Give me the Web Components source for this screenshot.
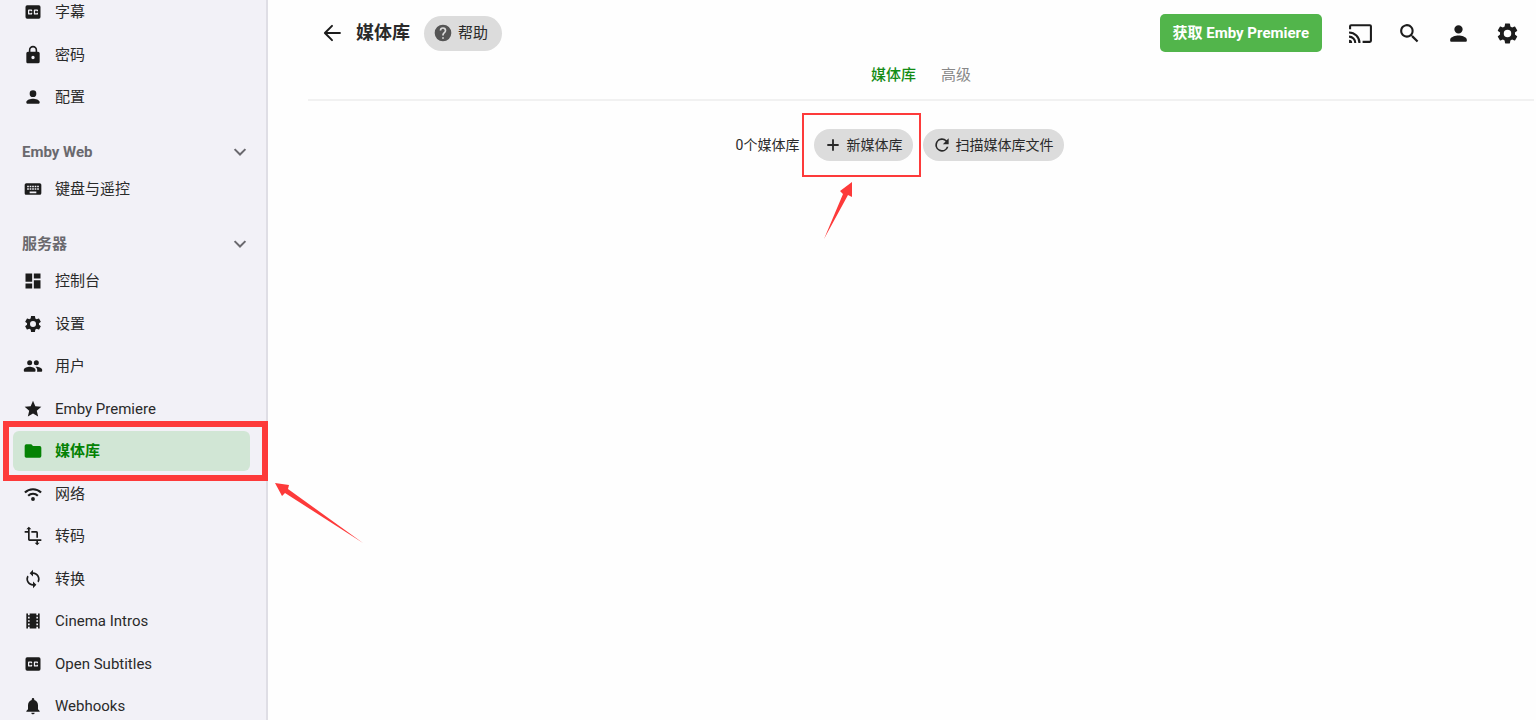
<!DOCTYPE html>
<html lang="zh-CN">
<head>
<meta charset="utf-8">
<title>媒体库</title>
<style>
  *,*::before,*::after{
    box-sizing: border-box;
  }
  body{
    margin: 0;
    background: #fefefe;
    color: #2a2a2a;
    font: 15px/20px Roboto, "Noto Sans CJK SC", sans-serif;
  }
</style>
</head>
<body>
<app-shell>
  <side-nav slot="nav">
    <nav-group>
      <nav-item icon="cc">字幕</nav-item>
      <nav-item icon="lock">密码</nav-item>
      <nav-item icon="person">配置</nav-item>
    </nav-group>
    <nav-group heading="Emby Web">
      <nav-item icon="keyboard">键盘与遥控</nav-item>
    </nav-group>
    <nav-group heading="服务器">
      <nav-item icon="dashboard">控制台</nav-item>
      <nav-item icon="settings">设置</nav-item>
      <nav-item icon="people">用户</nav-item>
      <nav-item icon="star">Emby Premiere</nav-item>
      <nav-item icon="folder" active>媒体库</nav-item>
      <nav-item icon="wifi">网络</nav-item>
      <nav-item icon="crop">转码</nav-item>
      <nav-item icon="sync">转换</nav-item>
      <nav-item icon="film">Cinema Intros</nav-item>
      <nav-item icon="cc">Open Subtitles</nav-item>
      <nav-item icon="bell">Webhooks</nav-item>
    </nav-group>
  </side-nav>
  <page-header heading="媒体库">
    <pill-button slot="help" icon="help" large>帮助</pill-button>
    <span slot="premiere">获取 Emby Premiere</span>
  </page-header>
  <page-tabs>
    <a href="#library" aria-current="page">媒体库</a>
    <a href="#advanced">高级</a>
  </page-tabs>
  <library-toolbar>
    <span slot="count">0个媒体库</span>
    <pill-button icon="add" marked>新媒体库</pill-button>
    <pill-button icon="refresh">扫描媒体库文件</pill-button>
  </library-toolbar>
</app-shell>

<script>
// all drawn on a 24x24 grid
const icons = {
  cc: `<path fill-rule="evenodd" d="M19 4H5a2 2 0 0 0-2 2v12a2 2 0 0 0 2 2h14a2 2 0 0 0 2-2V6a2 2 0 0 0-2-2zm-8 7H9.500v-.5h-2v3h2V13H11v1a1 1 0 0 1-1 1H7a1 1 0 0 1-1-1v-4a1 1 0 0 1 1-1h3a1 1 0 0 1 1 1v1zm7 0h-1.500v-.5h-2v3h2V13H18v1a1 1 0 0 1-1 1h-3a1 1 0 0 1-1-1v-4a1 1 0 0 1 1-1h3a1 1 0 0 1 1 1v1z"/>`,
  lock: `<path d="M18 8h-1V6A5 5 0 0 0 7 6v2H6a2 2 0 0 0-2 2v10c0 1.100.9 2 2 2h12a2 2 0 0 0 2-2V10a2 2 0 0 0-2-2zm-6 9a2 2 0 1 1 0-4 2 2 0 0 1 0 4zm3.100-9H8.900V6a3.100 3.100 0 0 1 6.200 0v2z"/>`,
  person: `<path d="M12 12a4 4 0 1 0 0-8 4 4 0 0 0 0 8zm0 2c-2.670 0-8 1.340-8 4v1a1 1 0 0 0 1 1h14a1 1 0 0 0 1-1v-1c0-2.660-5.330-4-8-4z"/>`,
  keyboard: `<path d="M20 5H4a2 2 0 0 0-2 2v10c0 1.100.9 2 2 2h16a2 2 0 0 0 2-2V7a2 2 0 0 0-2-2zm-9 3h2v2h-2V8zm0 3h2v2h-2v-2zM8 8h2v2H8V8zm0 3h2v2H8v-2zm-1 2H5v-2h2v2zm0-3H5V8h2v2zm9 7H8v-2h8v2zm0-4h-2v-2h2v2zm0-3h-2V8h2v2zm3 3h-2v-2h2v2zm0-3h-2V8h2v2z"/>`,
  dashboard: `<path d="M3 13h8V3H3v10zm0 8h8v-6H3v6zm10 0h8V11h-8v10zm0-18v6h8V3h-8z"/>`,
  settings: `<path d="M19.140 12.940c.04-.3.06-.61.06-.94 0-.32-.02-.64-.07-.94l2.030-1.580a.49.49 0 0 0 .12-.61l-1.920-3.320a.488.488 0 0 0-.59-.22l-2.390.96c-.5-.38-1.030-.7-1.620-.94l-.36-2.540a.484.484 0 0 0-.48-.41h-3.840c-.24 0-.43.17-.47.41l-.36 2.540c-.59.24-1.130.57-1.620.94l-2.390-.96c-.22-.08-.47 0-.59.22L2.740 8.870c-.12.21-.08.47.12.61l2.030 1.580c-.05.3-.09.63-.09.94s.02.64.07.94l-2.030 1.580a.49.49 0 0 0-.12.61l1.920 3.320c.12.22.37.29.59.22l2.390-.96c.5.38 1.030.7 1.620.94l.36 2.540c.05.24.24.41.48.41h3.840c.24 0 .44-.17.47-.41l.36-2.540c.59-.24 1.130-.56 1.620-.94l2.390.96c.22.08.47 0 .59-.22l1.920-3.320c.12-.22.07-.47-.12-.61l-2.010-1.580zM12 15.600A3.600 3.600 0 1 1 12 8.400a3.600 3.600 0 0 1 0 7.200z"/>`,
  people: `<path d="M16 11a3 3 0 1 0 0-6 3 3 0 0 0 0 6zm-8 0a3 3 0 1 0 0-6 3 3 0 0 0 0 6zm0 2c-2.330 0-7 1.170-7 3.500V18a1 1 0 0 0 1 1h12a1 1 0 0 0 1-1v-1.500C15 14.170 10.330 13 8 13zm8 0c-.29 0-.62.02-.97.05 1.160.84 1.970 1.970 1.970 3.450V18c0 .35-.07.69-.18 1H22a1 1 0 0 0 1-1v-1.500c0-2.330-4.670-3.500-7-3.500z"/>`,
  star: `<path d="M12 17.270 18.180 21l-1.640-7.030L22 9.240l-7.190-.61L12 2 9.190 8.630 2 9.240l5.460 4.730L5.820 21z"/>`,
  folder: `<path d="M10 4H4a2 2 0 0 0-2 2v12c0 1.100.9 2 2 2h16a2 2 0 0 0 2-2V8a2 2 0 0 0-2-2h-8l-2-2z"/>`,
  wifi: `<g fill="none" stroke="currentColor" stroke-width="2.500"><path d="M2.300 10.300a13.700 13.700 0 0 1 19.400 0M6.200 14.200a8.200 8.200 0 0 1 11.600 0"/></g><circle cx="12" cy="18" r="2.300"/>`,
  crop: `<path d="M22 18v-2H8V4h2L7 1 4 4h2v2H2v2h4v8c0 1.100.9 2 2 2h8v2h-2l3 3 3-3h-2v-2h4zM10 8h6v6h2V8a2 2 0 0 0-2-2h-6v2z"/>`,
  sync: `<path d="M12 4V1L8 5l4 4V6a6 6 0 0 1 5.250 8.800l1.460 1.460A8 8 0 0 0 12 4zm0 14a6 6 0 0 1-5.250-8.800L5.290 7.740A8 8 0 0 0 12 20v3l4-4-4-4v3z"/>`,
  film: `<path d="M18 3v2h-2V3H8v2H6V3H4v18h2v-2h2v2h8v-2h2v2h2V3h-2zM8 17H6v-2h2v2zm0-4H6v-2h2v2zm0-4H6V7h2v2zm10 8h-2v-2h2v2zm0-4h-2v-2h2v2zm0-4h-2V7h2v2z"/>`,
  bell: `<path d="M12 22a2 2 0 0 0 2-2h-4c0 1.100.9 2 2 2zm6-6v-5c0-3.070-1.630-5.640-4.500-6.320V4a1.500 1.500 0 0 0-3 0v.68C7.640 5.360 6 7.920 6 11v5l-2 2v1h16v-1l-2-2z"/>`,
  chevron: `<path fill="none" stroke="currentColor" stroke-width="2.400" d="M5.500 8.500 12 15l6.500-6.500"/>`,
  back: `<path fill="none" stroke="currentColor" stroke-width="2.400" stroke-linecap="round" stroke-linejoin="round" d="M21.500 12H4M12 3.500 3.500 12l8.500 8.500"/>`,
  help: `<path d="M12 2a10 10 0 1 0 0 20 10 10 0 0 0 0-20zm1 17h-2v-2h2v2zm2.070-7.750-.9.920C13.450 12.900 13 13.500 13 15h-2v-.5c0-1.100.45-2.100 1.170-2.830l1.240-1.260A2 2 0 1 0 10 9H8a4 4 0 0 1 8 0c0 .88-.36 1.680-.93 2.250z"/>`,
  cast: `<path d="M21 3H3a2 2 0 0 0-2 2v3h2V5h18v14h-7v2h7a2 2 0 0 0 2-2V5a2 2 0 0 0-2-2zM1 18v3h3a3 3 0 0 0-3-3zm0-4v2a5 5 0 0 1 5 5h2a7 7 0 0 0-7-7zm0-4v2a9 9 0 0 1 9 9h2A11 11 0 0 0 1 10z"/>`,
  search: `<path d="M15.500 14h-.79l-.28-.27A6.500 6.500 0 1 0 13.730 14.430l.27.28v.79l5 4.990L20.490 19l-4.990-5zm-6 0a4.500 4.500 0 1 1 0-9 4.500 4.500 0 0 1 0 9z"/>`,
  add: `<path fill="none" stroke="currentColor" stroke-width="2.200" stroke-linecap="round" d="M12 6v12M6 12h12"/>`,
  refresh: `<path d="M17.650 6.350A8 8 0 1 0 19.730 14h-2.080A6 6 0 1 1 12 6c1.660 0 3.140.69 4.220 1.780L13 11h7V4l-2.350 2.350z"/>`
};

class AppIcon extends HTMLElement {
  constructor() {
    super();
    this.attachShadow({ mode: "open" });
  }
  connectedCallback() {
    this.shadowRoot.innerHTML = `<style>
:host{
    display: block;
    flex: none;
    width: var(--icon-size, 20px);
    height: var(--icon-size, 20px);
}
svg{
    display: block;
    width: 100%;
    height: 100%;
    fill: currentColor;
}
</style>
<svg viewBox="0 0 24 24" aria-hidden="true">${icons[this.getAttribute("name")]}</svg>`;
  }
}
customElements.define("app-icon", AppIcon);

// hand-drawn style red arrow, one shape per direction
const arrows = {
  up: { size: "29 57", d: "M29 0v15l-4-2L1 57l19-45-3-3z" },
  left: { size: "88 60", d: "M0 0l14 2-1 4 75 54L10 10l-3 3z" }
};

class MarkArrow extends HTMLElement {
  constructor() {
    super();
    this.attachShadow({ mode: "open" });
  }
  connectedCallback() {
    const arrow = arrows[this.getAttribute("direction")];
    const [w, h] = arrow.size.split(" ");
    this.shadowRoot.innerHTML = `<style>
:host{
    display: block;
    pointer-events: none;
}
svg{
    display: block;
    fill: #fd3a3a;
}
</style>
<svg width="${w}" height="${h}" viewBox="0 0 ${w} ${h}" aria-hidden="true"><path d="${arrow.d}"/></svg>`;
  }
}
customElements.define("mark-arrow", MarkArrow);

const shellTemplate = document.createElement("template");
shellTemplate.innerHTML = `<style>
:host{
    display: grid;
    grid-template-columns: 268px minmax(0, 1fr);
    height: 100vh;
    overflow: hidden;
}
main{
    min-width: 0;
}
</style>
<slot name="nav"></slot>
<main><slot></slot></main>`;

class AppShell extends HTMLElement {
  constructor() {
    super();
    this.attachShadow({ mode: "open" }).appendChild(shellTemplate.content.cloneNode(true));
  }
}
customElements.define("app-shell", AppShell);

const navTemplate = document.createElement("template");
navTemplate.innerHTML = `<style>
:host{
    display: block;
    background: #f2f1f7;
    border-right: 2px solid #dfdee5;
}
/* the list is scrolled a little past its first row */
nav{
    margin-top: -9px;
    padding: 0 16px 0 13px;
}
</style>
<nav><slot></slot></nav>`;

class SideNav extends HTMLElement {
  constructor() {
    super();
    this.attachShadow({ mode: "open" }).appendChild(navTemplate.content.cloneNode(true));
  }
}
customElements.define("side-nav", SideNav);

class NavGroup extends HTMLElement {
  constructor() {
    super();
    this.attachShadow({ mode: "open" });
  }
  connectedCallback() {
    const heading = this.getAttribute("heading");
    this.shadowRoot.innerHTML = `<style>
:host{
    display: block;
}
button{
    display: flex;
    align-items: center;
    justify-content: space-between;
    width: 100%;
    height: 32px;
    margin: 18px 0 0;
    padding: 0 0 0 9px;
    border: 0;
    background: none;
    color: #6a696e;
    font: inherit;
    font-weight: 700;
}
::slotted(nav-item){
    height: 42px;
}
::slotted(nav-item:nth-child(even)){
    height: 43px;
}
</style>
${heading ? `<button type="button" aria-expanded="true">${heading}<app-icon name="chevron"></app-icon></button>` : ""}
<slot></slot>`;
  }
}
customElements.define("nav-group", NavGroup);

class NavItem extends HTMLElement {
  constructor() {
    super();
    this.attachShadow({ mode: "open" });
  }
  connectedCallback() {
    const active = this.hasAttribute("active");
    this.shadowRoot.innerHTML = `<style>
:host{
    display: flex;
    align-items: center;
    position: relative;
}
a{
    display: flex;
    flex: 1;
    align-items: center;
    gap: 12px;
    height: 40px;
    padding: 0 10px;
    border-radius: 6px;
    color: inherit;
    text-decoration: none;
}
app-icon{
    color: #1c1c1c;
}
:host([active]) a{
    background: #d1e6d5;
    color: #048204;
    font-weight: 700;
}
:host([active]) app-icon{
    color: #048204;
}
.box{
    position: absolute;
    inset: -9px -18px -9px -10px;
    border: 6px solid #fd3a3a;
    pointer-events: none;
}
mark-arrow{
    position: absolute;
    left: 262px;
    top: 53px;
}
</style>
<a href="#"${active ? ` aria-current="page"` : ""}><app-icon name="${this.getAttribute("icon")}"></app-icon><slot></slot></a>
${active ? `<div class="box"></div><mark-arrow direction="left"></mark-arrow>` : ""}`;
  }
}
customElements.define("nav-item", NavItem);

class PillButton extends HTMLElement {
  constructor() {
    super();
    this.attachShadow({ mode: "open" });
  }
  connectedCallback() {
    this.shadowRoot.innerHTML = `<style>
:host{
    display: block;
    position: relative;
}
button{
    display: flex;
    align-items: center;
    gap: 3px;
    height: 32px;
    padding: 0 11px 0 9px;
    border: 0;
    border-radius: 18px;
    background: #dcdcdc;
    color: #2a2a2a;
    font: inherit;
    font-size: 14px;
    white-space: nowrap;
}
:host([large]) button{
    gap: 5px;
    height: 35px;
    padding: 0 14px 0 9px;
    font-size: 15px;
}
:host([large]) app-icon{
    color: #555;
}
.box{
    position: absolute;
    inset: -16px -8px -16px -12px;
    border: 2px solid #fd3a3a;
    pointer-events: none;
}
mark-arrow{
    position: absolute;
    left: 9px;
    top: 53px;
}
</style>
<button type="button"><app-icon name="${this.getAttribute("icon")}"></app-icon><slot></slot></button>
${this.hasAttribute("marked") ? `<div class="box"></div><mark-arrow direction="up"></mark-arrow>` : ""}`;
  }
}
customElements.define("pill-button", PillButton);

class PageHeader extends HTMLElement {
  constructor() {
    super();
    this.attachShadow({ mode: "open" });
  }
  connectedCallback() {
    this.shadowRoot.innerHTML = `<style>
:host{
    display: block;
}
header{
    display: flex;
    align-items: center;
    padding: 14px 4px 0 54px;
}
h1{
    margin: 0 14px;
    font-size: 18px;
    line-height: 24px;
    font-weight: 700;
}
button{
    display: flex;
    align-items: center;
    justify-content: center;
    padding: 0;
    border: 0;
    background: none;
    color: #1c1c1c;
    font: inherit;
}
.premiere{
    height: 38px;
    margin: 0 14px 0 auto;
    padding: 0 13px;
    border-radius: 5px;
    background: #52b54b;
    color: #fff;
    font-weight: 700;
    white-space: nowrap;
}
.tool{
    --icon-size: 25px;
    width: 49px;
    height: 38px;
}
</style>
<header>
  <button type="button" aria-label="返回"><app-icon name="back"></app-icon></button>
  <h1>${this.getAttribute("heading")}</h1>
  <slot name="help"></slot>
  <button type="button" class="premiere"><slot name="premiere"></slot></button>
  <button type="button" class="tool" aria-label="投射"><app-icon name="cast"></app-icon></button>
  <button type="button" class="tool" aria-label="搜索"><app-icon name="search"></app-icon></button>
  <button type="button" class="tool" aria-label="用户"><app-icon name="person"></app-icon></button>
  <button type="button" class="tool" aria-label="设置"><app-icon name="settings"></app-icon></button>
</header>`;
  }
}
customElements.define("page-header", PageHeader);

const tabsTemplate = document.createElement("template");
tabsTemplate.innerHTML = `<style>
:host{
    display: block;
}
nav{
    display: flex;
    align-items: center;
    justify-content: center;
    gap: 25px;
    height: 48px;
    margin: -1px 2px 0 40px;
    border-bottom: 2px solid #f1f1f1;
}
::slotted(a){
    color: #888;
    text-decoration: none;
}
::slotted(a[aria-current]){
    color: #148c14;
    font-weight: 500;
}
</style>
<nav><slot></slot></nav>`;

class PageTabs extends HTMLElement {
  constructor() {
    super();
    this.attachShadow({ mode: "open" }).appendChild(tabsTemplate.content.cloneNode(true));
  }
}
customElements.define("page-tabs", PageTabs);

const toolbarTemplate = document.createElement("template");
toolbarTemplate.innerHTML = `<style>
:host{
    display: flex;
    align-items: center;
    justify-content: center;
    gap: 10px;
    padding: 28px 4px 0 0;
    font-size: 14px;
}
::slotted(span){
    margin-right: 5px;
}
</style>
<slot name="count"></slot>
<slot></slot>`;

class LibraryToolbar extends HTMLElement {
  constructor() {
    super();
    this.attachShadow({ mode: "open" }).appendChild(toolbarTemplate.content.cloneNode(true));
  }
}
customElements.define("library-toolbar", LibraryToolbar);
</script>
</body>
</html>
